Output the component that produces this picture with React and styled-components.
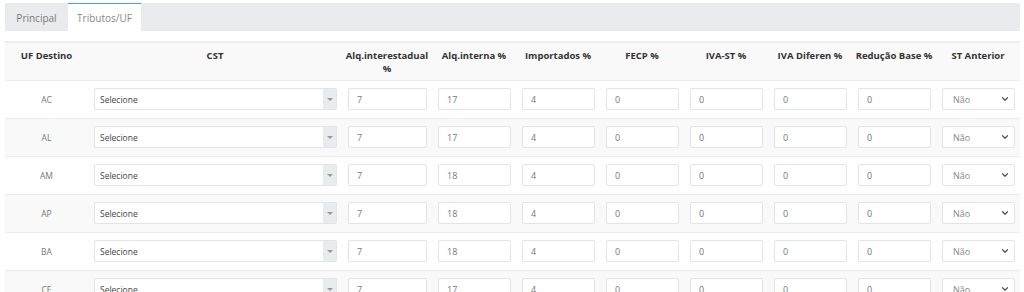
import React from 'react';
import styled, { createGlobalStyle } from 'styled-components';
import { ChevronDown } from 'lucide-react';

const GlobalStyle = createGlobalStyle`
    html, body {
        margin: 0;
        padding: 0;
        overflow: hidden;
        background: #ffffff;
        font-family: "Open Sans", "Liberation Sans", sans-serif;
    }
`

const rows = [
    { uf: 'AC', interna: 17 },
    { uf: 'AL', interna: 17 },
    { uf: 'AM', interna: 18 },
    { uf: 'AP', interna: 18 },
    { uf: 'BA', interna: 18 },
    { uf: 'CE', interna: 17 },
]

const columns = [
    { label: 'UF Destino', width: 83 },
    { label: 'CST', width: 254 },
    { label: <>Alq.interestadual<br />%</>, width: 90 },
    { label: 'Alq.interna %', width: 84 },
    { label: 'Importados %', width: 84 },
    { label: 'FECP %', width: 84 },
    { label: 'IVA-ST %', width: 84 },
    { label: 'IVA Diferen %', width: 84 },
    { label: 'Redução Base %', width: 84 },
    { label: 'ST Anterior', width: 84 },
]

const App = () => {
    return (
        <Page>
            <GlobalStyle />
            <TabBar>
                <Tab>Principal</Tab>
                <Tab active>Tributos/UF</Tab>
            </TabBar>
            <Table>
                <colgroup>
                    {columns.map((col, i) => <col key={i} style={{ width: col.width }} />)}
                </colgroup>
                <thead>
                    <tr>
                        {columns.map((col, i) => <HeadCell key={i}>{col.label}</HeadCell>)}
                    </tr>
                </thead>
                <tbody>
                    {rows.map((row, index) => (
                        <Row key={row.uf} striped={index % 2 === 1}>
                            <UfCell>{row.uf}</UfCell>
                            <Cell>
                                <CstSelect>
                                    <CstText>Selecione</CstText>
                                    <CstArrow><Caret /></CstArrow>
                                </CstSelect>
                            </Cell>
                            <Cell><NumInput>7</NumInput></Cell>
                            <Cell><NumInput>{row.interna}</NumInput></Cell>
                            <Cell><NumInput>4</NumInput></Cell>
                            <Cell><NumInput>0</NumInput></Cell>
                            <Cell><NumInput>0</NumInput></Cell>
                            <Cell><NumInput>0</NumInput></Cell>
                            <Cell><NumInput>0</NumInput></Cell>
                            <Cell>
                                <StSelect>
                                    <span>Não</span>
                                    <ChevronDown size={10} strokeWidth={3} color="#555" />
                                </StSelect>
                            </Cell>
                        </Row>
                    ))}
                </tbody>
            </Table>
        </Page>
    )
}

const Page = styled.div`
    padding: 3px 4px 0 5px;
`

const TabBar = styled.div`
    display: flex;
    height: 28px;
    background: #e9ebee;
`

const Tab = styled.div`
    display: flex;
    align-items: center;
    width: ${props => props.active ? '73px' : '63px'};
    justify-content: center;
    font-size: 10px;
    color: ${props => props.active ? '#8a8a8a' : '#7a7a7a'};
    background: ${props => props.active ? '#ffffff' : 'transparent'};
    border-top: 1px solid ${props => props.active ? '#4a9fd8' : 'transparent'};
    box-sizing: border-box;
`

const Table = styled.table`
    margin-top: 10px;
    width: 1015px;
    border-collapse: collapse;
    table-layout: fixed;
    border-top: 2px solid #eeeeee;
`

const HeadCell = styled.th`
    height: 38px;
    box-sizing: border-box;
    padding: 6px 2px 0;
    vertical-align: top;
    text-align: center;
    font-size: 9.5px;
    line-height: 13px;
    font-weight: 700;
    color: #333333;
    background: #f9f9f9;
    border-bottom: 1px solid #ececec;
`

const Row = styled.tr`
    height: 38px;
    background: ${props => props.striped ? '#f9f9f9' : '#ffffff'};
    border-bottom: 1px solid #ececec;
`

const Cell = styled.td`
    padding: 0 5px 0 6px;
    vertical-align: middle;
`

const UfCell = styled.td`
    text-align: center;
    vertical-align: middle;
    font-size: 8.5px;
    color: #777777;
    padding: 0;
`

const NumInput = styled.div`
    height: 22px;
    box-sizing: border-box;
    border: 1px solid #e2e4e7;
    border-radius: 2px;
    background: #ffffff;
    padding: 0 8px;
    display: flex;
    align-items: center;
    font-size: 9px;
    color: #777777;
`

const CstSelect = styled.div`
    height: 22px;
    box-sizing: border-box;
    border: 1px solid #e2e4e7;
    border-radius: 2px;
    background: #ffffff;
    display: flex;
    align-items: stretch;
    overflow: hidden;
`

const CstText = styled.div`
    flex: 1;
    display: flex;
    align-items: center;
    padding-left: 5px;
    font-size: 8.5px;
    color: #444444;
`

const CstArrow = styled.div`
    width: 13px;
    background: #e9ecef;
    display: flex;
    align-items: center;
    justify-content: center;
`

const Caret = styled.div`
    width: 0;
    height: 0;
    border-left: 3px solid transparent;
    border-right: 3px solid transparent;
    border-top: 3px solid #999999;
`

const StSelect = styled.div`
    height: 22px;
    box-sizing: border-box;
    border: 1px solid #e2e4e7;
    border-radius: 2px;
    background: #ffffff;
    display: flex;
    align-items: center;
    justify-content: space-between;
    padding: 0 4px 0 10px;
    font-size: 9px;
    color: #888888;
`

export default App;
